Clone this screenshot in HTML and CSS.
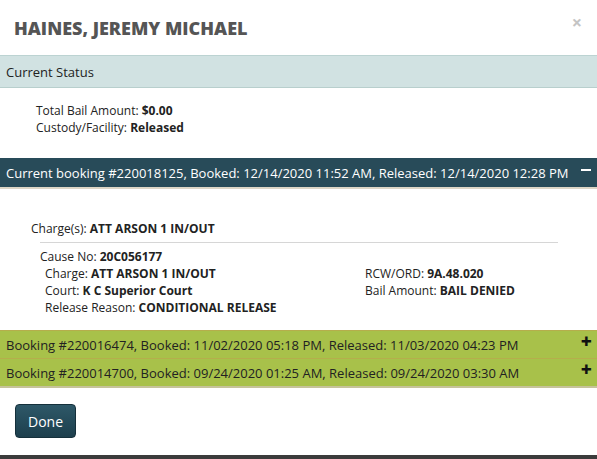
FILE: index.html
```html
<!DOCTYPE html>
<html>
<head>
<meta charset="utf-8">
<link rel="stylesheet" href="styles.css">
</head>
<body>
<div class="modal">
  <div class="modal-header">
    <h2 class="title">HAINES, JEREMY MICHAEL</h2>
    <span class="close">×</span>
  </div>
  <div class="status-bar">Current Status</div>
  <div class="status-body">
    <div>Total Bail Amount: <b>$0.00</b></div>
    <div>Custody/Facility: <b>Released</b></div>
  </div>
  <div class="acc-head acc-dark">
    <span>Current booking #220018125, Booked: 12/14/2020 11:52 AM, Released: 12/14/2020 12:28 PM</span>
    <span class="minus"></span>
  </div>
  <div class="acc-body">
    <div class="charges">Charge(s): <b>ATT ARSON 1 IN/OUT</b></div>
    <div class="cause">
      <div class="cause-no">Cause No: <b>20C056177</b></div>
      <div class="grid">
        <div class="col">
          <div>Charge: <b>ATT ARSON 1 IN/OUT</b></div>
          <div>Court: <b>K C Superior Court</b></div>
          <div>Release Reason: <b>CONDITIONAL RELEASE</b></div>
        </div>
        <div class="col">
          <div>RCW/ORD: <b>9A.48.020</b></div>
          <div>Bail Amount: <b>BAIL DENIED</b></div>
        </div>
      </div>
    </div>
  </div>
  <div class="acc-head acc-green">
    <span>Booking #220016474, Booked: 11/02/2020 05:18 PM, Released: 11/03/2020 04:23 PM</span>
    <span class="plus">+</span>
  </div>
  <div class="acc-head acc-green second">
    <span>Booking #220014700, Booked: 09/24/2020 01:25 AM, Released: 09/24/2020 03:30 AM</span>
    <span class="plus">+</span>
  </div>
  <div class="footer">
    <button class="done">Done</button>
  </div>
</div>
</body>
</html>
```
FILE: styles.css
```css
* { box-sizing: border-box; }
html, body { margin: 0; padding: 0; }
body {
  background: #3b3b3b;
  font-family: "Open Sans", "Liberation Sans", sans-serif;
  color: #222;
  width: 597px;
  height: 459px;
  overflow: hidden;
}
.modal {
  background: #fff;
  height: 455px;
  display: flex;
  flex-direction: column;
}
.modal-header {
  height: 55px;
  display: flex;
  align-items: center;
  justify-content: space-between;
  padding: 0 14px 0 14px;
}
.title {
  margin: 0;
  font-size: 18px;
  font-weight: 800;
  color: #555;
  letter-spacing: 0;
}
.close {
  color: #c4c4c4;
  font-size: 18px;
  font-weight: 700;
  margin-top: -11px;
  margin-right: 1px;
}
.status-bar {
  height: 33px;
  background: #d1e2e2;
  border-top: 1px solid #bcd3d2;
  border-bottom: 1px solid #b8cfcd;
  font-size: 13px;
  color: #222;
  display: flex;
  align-items: center;
  padding-left: 6px;
}
.status-body {
  padding: 14px 0 0 36px;
  font-size: 12px;
  line-height: 17px;
  height: 70px;
}
.status-body b, .acc-body b { font-weight: 700; }
.acc-head {
  display: flex;
  align-items: center;
  justify-content: space-between;
  font-size: 13px;
  padding: 0 6px 0 6px;
}
.acc-dark {
  height: 31px;
  background: #284b59;
  color: #fff;
  border-bottom: 2px solid #ddd6c6;
}
.minus {
  width: 10px;
  height: 2px;
  background: #fff;
  margin-right: 0;
  margin-top: -5px;
}
.acc-body {
  font-size: 12px;
  line-height: 17px;
  padding: 31px 0 0 31px;
  height: 141px;
}
.charges { margin-bottom: 5px; }
.cause {
  margin-left: 9px;
  width: 518px;
  border-top: 1px solid #d6d6d6;
  padding-top: 5px;
}
.grid {
  display: grid;
  grid-template-columns: 320px auto;
  padding-left: 5px;
}
.acc-green {
  height: 29px;
  background: #a8c14a;
  border-top: 1px solid #b5ae4c;
  border-bottom: 1px solid #b5ae4c;
  color: #222;
}
.acc-green.second { border-top: none; border-bottom: 2px solid #c6c39a; }
.plus {
  font-weight: 800;
  font-size: 19px;
  line-height: 1;
  margin-top: -7px;
  margin-right: -1px;
  color: #111;
}
.footer {
  padding: 16px 0 0 15px;
}
.done {
  width: 61px;
  height: 34px;
  background: linear-gradient(#2e5868, #1d3f4d);
  border: 1px solid #15303b;
  border-radius: 4px;
  color: #fff;
  font-family: "Open Sans", "Liberation Sans", sans-serif;
  font-size: 14px;
  padding: 0;
}
```
